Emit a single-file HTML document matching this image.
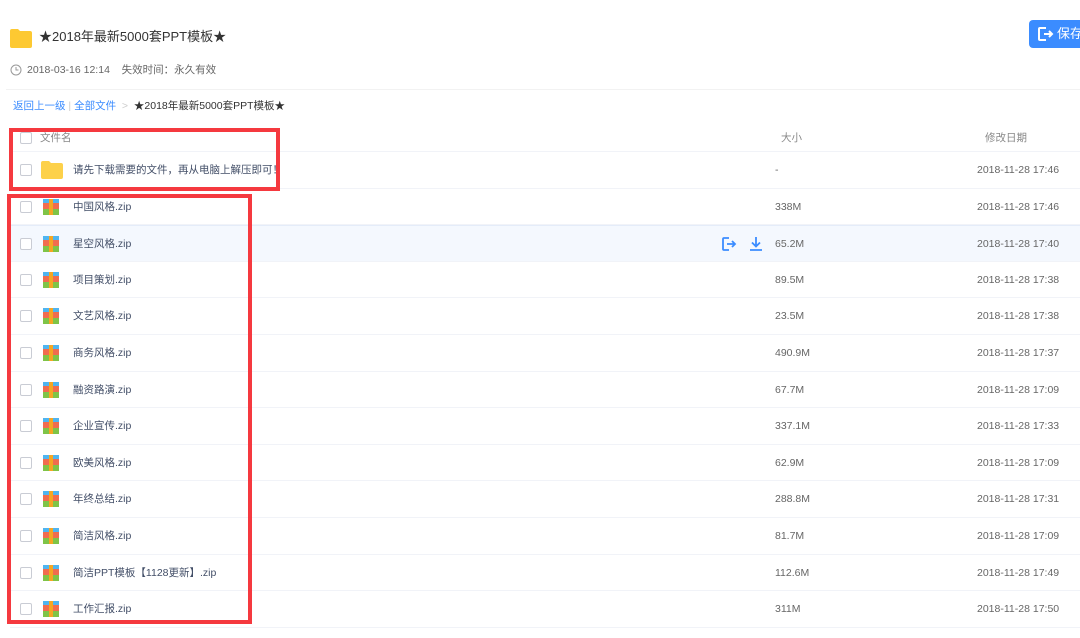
<!DOCTYPE html>
<html><head><meta charset="utf-8"><style>
*{margin:0;padding:0;box-sizing:border-box}
body{width:1080px;height:638px;overflow:hidden;background:#fff;font-family:"Liberation Sans","Noto Sans CJK SC",sans-serif;color:#333;position:relative}
.a{position:absolute;white-space:nowrap}
.row{position:absolute;left:10px;width:1070px;height:36.6px;border-bottom:1px solid #f1f3f8;font-size:10.5px;color:#424e67;line-height:36px}
.row div{white-space:nowrap}
.cb{position:absolute;left:10px;top:12px;width:12px;height:12px;border:1px solid #c9ccd4;border-radius:2px;background:#fff}
.ic{position:absolute;left:33px;top:10px;width:16px;height:16px}
.nm{position:absolute;left:63px;top:0}
.sz{position:absolute;left:765px;top:0;color:#666}
.dt{position:absolute;left:967px;top:0;color:#666}
.red{position:absolute;border:4px solid #f5393f}
</style></head><body>
<svg class="a" style="left:10px;top:28px" width="22" height="20"><path d="M0 3 Q0 1 2 1 H8 L10 3 H20 Q22 3 22 5 V18 Q22 20 20 20 H2 Q0 20 0 18Z" fill="#fdc932"/></svg>
<div class="a" style="left:39px;top:28px;font-size:13px;line-height:18px;color:#333">★2018年最新5000套PPT模板★</div>
<div class="a" style="left:1029px;top:20px;width:60px;height:28px;background:#3b8cff;border-radius:4px;color:#fff;font-size:13px;line-height:28px;padding-left:28px">保存到</div>
<svg class="a" style="left:1037px;top:26px" width="17" height="16"><path d="M9 2H3Q2 2 2 3V13Q2 14 3 14H9M7 8H15M12 5L15 8L12 11" stroke="#fff" stroke-width="2" fill="none"/></svg>
<svg class="a" style="left:10px;top:64px" width="12" height="12"><circle cx="6" cy="6" r="5" stroke="#999" fill="none"/><path d="M6 3V6H8.5" stroke="#999" fill="none"/></svg>
<div class="a" style="left:27px;top:62px;font-size:10.5px;line-height:16px;color:#666">2018-03-16 12:14 &nbsp;&nbsp;&nbsp;失效时间：永久有效</div>
<div class="a" style="left:6px;top:89px;width:1074px;border-top:1px solid #f2f2f2"></div>
<div class="a" style="left:13px;top:98px;font-size:10.5px;line-height:16px;color:#3b8cff">返回上一级 <span style="color:#ccc">|</span> 全部文件 <span style="color:#ccc">&nbsp;&gt;&nbsp;</span> <span style="color:#333">★2018年最新5000套PPT模板★</span></div>
<div class="row" style="top:119px;height:33px;line-height:38px"><div class="cb" style="top:13px"></div><div class="nm" style="left:30px;color:#888">文件名</div><div class="sz" style="left:771px;color:#888">大小</div><div class="dt" style="left:975px;color:#888">修改日期</div></div>
<div class="row" style="top:152px"><div class="cb"></div><svg class="ic" style="left:31px;top:9px;width:22px;height:18px" width="22" height="18"><path d="M0 2 Q0 0 2 0 H8 L10 2 H20 Q22 2 22 4 V16 Q22 18 20 18 H2 Q0 18 0 16Z" fill="#fdd14a"/></svg><div class="nm">请先下载需要的文件，再从电脑上解压即可！</div><div class="sz">-</div><div class="dt">2018-11-28 17:46</div></div>
<div class="row" style="top:188.6px"><div class="cb"></div><svg class="ic"><rect x="0" y="0" width="16" height="8" fill="#4fb5f0"/><rect x="0" y="8" width="16" height="8" fill="#7fc447"/><rect x="0" y="4" width="16" height="6" fill="#f16c4f"/><rect x="6" y="0" width="4" height="16" fill="#f5a623"/></svg><div class="nm">中国风格.zip</div><div class="sz">338M</div><div class="dt">2018-11-28 17:46</div></div>
<div class="row" style="top:225.2px;background:#f4f8fe;border-top:1px solid #e4ecf9"><div class="cb"></div><svg class="ic"><rect x="0" y="0" width="16" height="8" fill="#4fb5f0"/><rect x="0" y="8" width="16" height="8" fill="#7fc447"/><rect x="0" y="4" width="16" height="6" fill="#f16c4f"/><rect x="6" y="0" width="4" height="16" fill="#f5a623"/></svg><div class="nm">星空风格.zip</div>
<svg class="a" style="left:711px;top:10px" width="16" height="16"><path d="M8 2H3Q2 2 2 3V13Q2 14 3 14H8M6 8H14M11 5L14 8L11 11" stroke="#3b8cff" stroke-width="1.8" fill="none"/></svg>
<svg class="a" style="left:738px;top:10px" width="16" height="16"><path d="M8 1V10M4 6.5L8 10.5L12 6.5M2 14H14" stroke="#3b8cff" stroke-width="1.8" fill="none"/></svg>
<div class="sz">65.2M</div><div class="dt">2018-11-28 17:40</div></div>
<div class="row" style="top:261.8px"><div class="cb"></div><svg class="ic"><rect x="0" y="0" width="16" height="8" fill="#4fb5f0"/><rect x="0" y="8" width="16" height="8" fill="#7fc447"/><rect x="0" y="4" width="16" height="6" fill="#f16c4f"/><rect x="6" y="0" width="4" height="16" fill="#f5a623"/></svg><div class="nm">项目策划.zip</div><div class="sz">89.5M</div><div class="dt">2018-11-28 17:38</div></div>
<div class="row" style="top:298.4px"><div class="cb"></div><svg class="ic"><rect x="0" y="0" width="16" height="8" fill="#4fb5f0"/><rect x="0" y="8" width="16" height="8" fill="#7fc447"/><rect x="0" y="4" width="16" height="6" fill="#f16c4f"/><rect x="6" y="0" width="4" height="16" fill="#f5a623"/></svg><div class="nm">文艺风格.zip</div><div class="sz">23.5M</div><div class="dt">2018-11-28 17:38</div></div>
<div class="row" style="top:335px"><div class="cb"></div><svg class="ic"><rect x="0" y="0" width="16" height="8" fill="#4fb5f0"/><rect x="0" y="8" width="16" height="8" fill="#7fc447"/><rect x="0" y="4" width="16" height="6" fill="#f16c4f"/><rect x="6" y="0" width="4" height="16" fill="#f5a623"/></svg><div class="nm">商务风格.zip</div><div class="sz">490.9M</div><div class="dt">2018-11-28 17:37</div></div>
<div class="row" style="top:371.6px"><div class="cb"></div><svg class="ic"><rect x="0" y="0" width="16" height="8" fill="#4fb5f0"/><rect x="0" y="8" width="16" height="8" fill="#7fc447"/><rect x="0" y="4" width="16" height="6" fill="#f16c4f"/><rect x="6" y="0" width="4" height="16" fill="#f5a623"/></svg><div class="nm">融资路演.zip</div><div class="sz">67.7M</div><div class="dt">2018-11-28 17:09</div></div>
<div class="row" style="top:408.2px"><div class="cb"></div><svg class="ic"><rect x="0" y="0" width="16" height="8" fill="#4fb5f0"/><rect x="0" y="8" width="16" height="8" fill="#7fc447"/><rect x="0" y="4" width="16" height="6" fill="#f16c4f"/><rect x="6" y="0" width="4" height="16" fill="#f5a623"/></svg><div class="nm">企业宣传.zip</div><div class="sz">337.1M</div><div class="dt">2018-11-28 17:33</div></div>
<div class="row" style="top:444.8px"><div class="cb"></div><svg class="ic"><rect x="0" y="0" width="16" height="8" fill="#4fb5f0"/><rect x="0" y="8" width="16" height="8" fill="#7fc447"/><rect x="0" y="4" width="16" height="6" fill="#f16c4f"/><rect x="6" y="0" width="4" height="16" fill="#f5a623"/></svg><div class="nm">欧美风格.zip</div><div class="sz">62.9M</div><div class="dt">2018-11-28 17:09</div></div>
<div class="row" style="top:481.4px"><div class="cb"></div><svg class="ic"><rect x="0" y="0" width="16" height="8" fill="#4fb5f0"/><rect x="0" y="8" width="16" height="8" fill="#7fc447"/><rect x="0" y="4" width="16" height="6" fill="#f16c4f"/><rect x="6" y="0" width="4" height="16" fill="#f5a623"/></svg><div class="nm">年终总结.zip</div><div class="sz">288.8M</div><div class="dt">2018-11-28 17:31</div></div>
<div class="row" style="top:518px"><div class="cb"></div><svg class="ic"><rect x="0" y="0" width="16" height="8" fill="#4fb5f0"/><rect x="0" y="8" width="16" height="8" fill="#7fc447"/><rect x="0" y="4" width="16" height="6" fill="#f16c4f"/><rect x="6" y="0" width="4" height="16" fill="#f5a623"/></svg><div class="nm">简洁风格.zip</div><div class="sz">81.7M</div><div class="dt">2018-11-28 17:09</div></div>
<div class="row" style="top:554.6px"><div class="cb"></div><svg class="ic"><rect x="0" y="0" width="16" height="8" fill="#4fb5f0"/><rect x="0" y="8" width="16" height="8" fill="#7fc447"/><rect x="0" y="4" width="16" height="6" fill="#f16c4f"/><rect x="6" y="0" width="4" height="16" fill="#f5a623"/></svg><div class="nm">简洁PPT模板【1128更新】.zip</div><div class="sz">112.6M</div><div class="dt">2018-11-28 17:49</div></div>
<div class="row" style="top:591.2px"><div class="cb"></div><svg class="ic"><rect x="0" y="0" width="16" height="8" fill="#4fb5f0"/><rect x="0" y="8" width="16" height="8" fill="#7fc447"/><rect x="0" y="4" width="16" height="6" fill="#f16c4f"/><rect x="6" y="0" width="4" height="16" fill="#f5a623"/></svg><div class="nm">工作汇报.zip</div><div class="sz">311M</div><div class="dt">2018-11-28 17:50</div></div>
<div class="red" style="left:9px;top:128px;width:271px;height:63px"></div>
<div class="red" style="left:7px;top:194px;width:245px;height:430px"></div>
</body></html>
